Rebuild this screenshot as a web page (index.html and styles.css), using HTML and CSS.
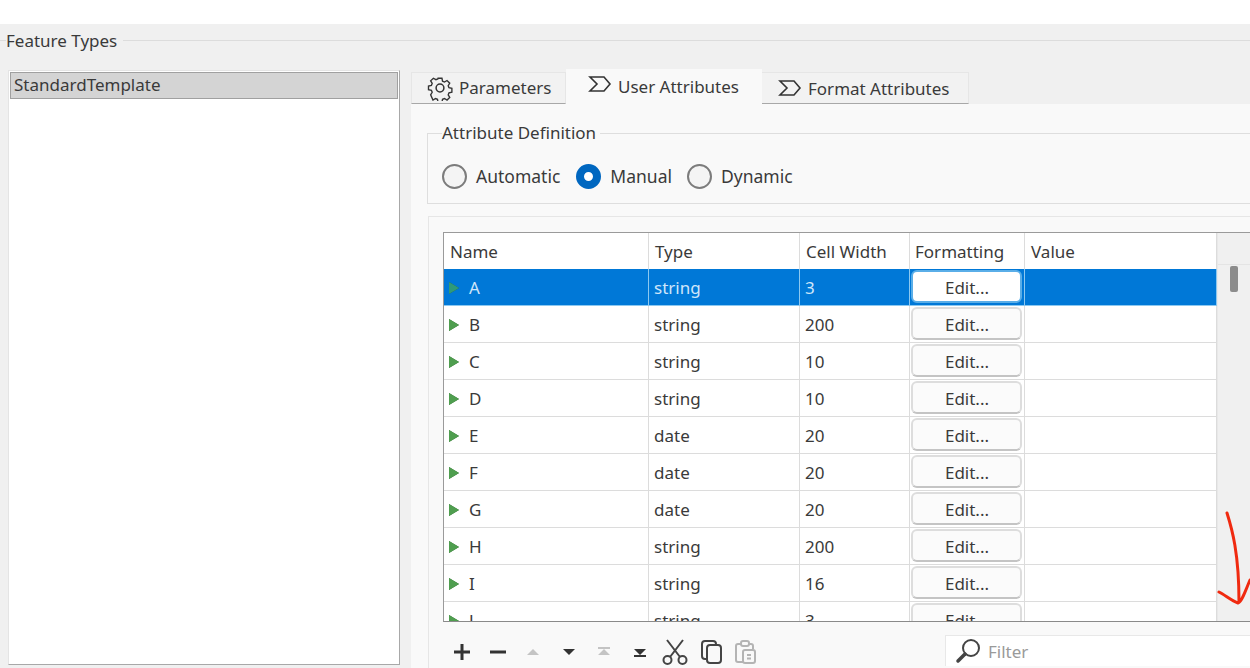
FILE: index.html
```html
<!DOCTYPE html>
<html lang="en">
<head>
<meta charset="utf-8">
<title>Feature Types</title>
<link rel="stylesheet" href="styles.css">
</head>
<body>
<div class="top-strip"></div>
<main class="main">
  <header class="section-head"><span>Feature Types</span></header>
  <div class="content">
    <div class="listbox"><div class="list-item">StandardTemplate</div></div>
    <section class="right">
      <nav class="tabs">
        <div class="tab tab-params">
          <svg class="tab-icon gear" viewBox="0 0 24 24" width="26" height="26"><path d="M10 2h4l.6 3 2 .9 2.6-1.6 2.8 2.8-1.6 2.6.8 2 3 .7v4l-3 .6-.8 2 1.6 2.6-2.8 2.8-2.6-1.6-2 .8-.6 3h-4l-.6-3-2-.8-2.6 1.6L2.4 19l1.6-2.6-.8-2-3-.6V10l3-.7.8-2L2.400 4.700 5.200 2 7.800 3.500l2-.8z" transform="translate(1.200 1.200) scale(.9)"/><circle cx="12" cy="12" r="3.600"/></svg>
          <span>Parameters</span>
        </div>
        <div class="tab tab-active">
          <svg class="tab-icon sigma" viewBox="0 0 24 18" width="24" height="18"><path d="M2 2h14l6 7-6 7H2l7-7z"/></svg>
          <span>User Attributes</span>
        </div>
        <div class="tab tab-format">
          <svg class="tab-icon sigma" viewBox="0 0 24 18" width="24" height="18"><path d="M2 2h14l6 7-6 7H2l7-7z"/></svg>
          <span>Format Attributes</span>
        </div>
      </nav>
      <div class="panel">
        <fieldset class="group">
          <legend>Attribute Definition</legend>
          <div class="radios">
            <span class="radio"></span><span class="radio-label">Automatic</span>
            <span class="radio radio-on"></span><span class="radio-label">Manual</span>
            <span class="radio"></span><span class="radio-label">Dynamic</span>
          </div>
        </fieldset>
        <div class="table-box">
          <div class="table-wrap">
            <div class="table">
              <div class="row head"><div>Name</div><div>Type</div><div>Cell Width</div><div class="head-fmt">Formatting</div><div>Value</div></div>
              <div class="row selected"><div class="name"><i class="arrow"></i>A</div><div>string</div><div>3</div><div class="fmt"><button class="edit">Edit...</button></div><div></div></div>
              <div class="row"><div class="name"><i class="arrow"></i>B</div><div>string</div><div>200</div><div class="fmt"><button class="edit">Edit...</button></div><div></div></div>
              <div class="row"><div class="name"><i class="arrow"></i>C</div><div>string</div><div>10</div><div class="fmt"><button class="edit">Edit...</button></div><div></div></div>
              <div class="row"><div class="name"><i class="arrow"></i>D</div><div>string</div><div>10</div><div class="fmt"><button class="edit">Edit...</button></div><div></div></div>
              <div class="row"><div class="name"><i class="arrow"></i>E</div><div>date</div><div>20</div><div class="fmt"><button class="edit">Edit...</button></div><div></div></div>
              <div class="row"><div class="name"><i class="arrow"></i>F</div><div>date</div><div>20</div><div class="fmt"><button class="edit">Edit...</button></div><div></div></div>
              <div class="row"><div class="name"><i class="arrow"></i>G</div><div>date</div><div>20</div><div class="fmt"><button class="edit">Edit...</button></div><div></div></div>
              <div class="row"><div class="name"><i class="arrow"></i>H</div><div>string</div><div>200</div><div class="fmt"><button class="edit">Edit...</button></div><div></div></div>
              <div class="row"><div class="name"><i class="arrow"></i>I</div><div>string</div><div>16</div><div class="fmt"><button class="edit">Edit...</button></div><div></div></div>
              <div class="row"><div class="name"><i class="arrow"></i>J</div><div>string</div><div>3</div><div class="fmt"><button class="edit">Edit...</button></div><div></div></div>
            </div>
            <div class="scrollbar"><div class="scroll-head"></div><div class="thumb"></div></div>
          </div>
          <div class="toolbar">
            <div class="tools">
              <svg viewBox="0 0 20 24" width="20" height="24"><path class="bold" d="M2 12h16M10 4v16"/></svg>
              <svg viewBox="0 0 20 24" width="20" height="24"><path class="bold" d="M2 12h16"/></svg>
              <svg viewBox="0 0 20 24" width="20" height="24"><path class="tri-off" d="M10 9l6 6H4z"/></svg>
              <svg viewBox="0 0 20 24" width="20" height="24"><path class="tri-on" d="M4 9h12l-6 6z"/></svg>
              <svg viewBox="0 0 20 24" width="20" height="24"><path class="tri-off" d="M4 7h12v2H4zM10 9l6 6H4z"/></svg>
              <svg viewBox="0 0 20 24" width="20" height="24"><path class="tri-on" d="M4 9h12l-6 6zM4 15h12v2H4z"/></svg>
              <svg viewBox="0 0 28 28" width="28" height="28" class="cut"><path class="line" d="M6 2l13 17M22 2L9 19"/><circle class="line" cx="6.500" cy="22" r="4"/><circle class="line" cx="21.500" cy="22" r="4"/></svg>
              <svg viewBox="0 0 24 26" width="24" height="26" class="copy"><rect class="line" x="2" y="2" width="14" height="18" rx="3"/><rect class="line fill" x="7" y="6" width="14" height="18" rx="3"/></svg>
              <svg viewBox="0 0 24 26" width="24" height="26" class="paste"><path class="line-off" d="M7 5H4a2 2 0 0 0-2 2v14a2 2 0 0 0 2 2h5M15 5h2a2 2 0 0 1 2 2v3"/><rect class="line-off" x="7" y="2" width="8" height="5" rx="2"/><rect class="line-off" x="9" y="11" width="12" height="13" rx="2"/><path class="line-off" d="M13 16h4M13 19.500h4"/></svg>
            </div>
            <div class="filter">
              <svg viewBox="0 0 26 26" width="26" height="26"><circle class="line" cx="16" cy="10" r="8"/><path class="handle" d="M10 16l-7 7"/></svg>
              <span>Filter</span>
            </div>
          </div>
        </div>
      </div>
    </section>
  </div>
</main>
<svg class="annotation" viewBox="0 0 40 100" width="40" height="100"><path d="M7 3c5 16 12 40 12 89M-1 82c6 3 13 9 19 11 4-1 8-14 12-23"/></svg>
</body>
</html>
```

FILE: styles.css
```css
* { box-sizing: border-box; }
html, body { margin: 0; height: 668px; overflow: hidden; }
body {
  background: #fff;
  color: #3a3a3a;
  font-family: "Noto Sans", "Open Sans", "Liberation Sans", sans-serif;
  font-size: 17px;
  position: relative;
  width: 1250px;
}
.top-strip { height: 24px; background: #fff; }
.main { height: 644px; background: #f0f0f0; }

.section-head {
  height: 34px;
  display: flex;
  align-items: center;
  line-height: 34px;
}
.section-head::before { content: ""; width: 6px; border-top: 1px solid #dcdcdc; margin-top: -2px; }
.section-head::after { content: ""; flex: 1; border-top: 1px solid #dcdcdc; margin: -2px 0 0 6px; }

.content { display: flex; padding: 12px 0 0 8px; }
.listbox {
  width: 392px;
  height: 595px;
  flex: none;
  background: #fff;
  border: 1px solid #a8a8a8;
  border-top-color: #e4e4e4;
  border-left-color: #e4e4e4;
  padding: 1px;
}
.list-item {
  height: 27px;
  line-height: 23px;
  padding-left: 3px;
  background: #d4d4d4;
  border: 1px solid #a0a0a0;
}

.right { width: 839px; margin-left: 11px; flex: none; }
.tabs { display: flex; align-items: flex-end; height: 35px; margin-top: -1px; }
.tab {
  height: 32px;
  display: flex;
  align-items: center;
  background: #f2f2f2;
  border: 1px solid #e6e6e6;
  border-bottom: 1px solid #a8a8a8;
  border-left: 0;
  line-height: 30px;
}
.tab-params { width: 155px; padding-left: 15px; border-left: 1px solid #e6e6e6; }
.tab-active { width: 196px; height: 35px; padding: 0 0 0 22px; background: #f9f9f9; border: 0; }
.tab-format { width: 207px; padding: 2px 0 0 16px; }
.tab-icon { flex: none; fill: none; stroke: #333; stroke-width: 1.600; margin-right: 6px; }
.tab-active .sigma { margin-top: -6px; }
.tab-format .sigma { margin-top: -2px; }
.gear { stroke-width: 1.400; }

.panel { height: 564px; background: #f9f9f9; overflow: hidden; padding-top: 17px; }
.group {
  margin: 0 -10px 0 16px;
  padding: 18px 0 14px 14px;
  min-width: 0;
  border: 1px solid #dedede;
  height: 83px;
}
.group legend { padding: 0 4px 0 0; line-height: 24px; }
.radios { display: flex; align-items: center; height: 26px; }
.radio {
  width: 25px;
  height: 25px;
  border-radius: 50%;
  border: 2px solid #7c7c7c;
  background: #f4f4f4;
  margin-right: 9px;
  flex: none;
}
.radio-on { background: #fff; border: 8px solid #0067c0; }
.radio-label { margin-right: 16px; font-size: 17.500px; }
.radio-on + .radio-label { margin-right: 15px; }

.table-box {
  margin: 12px 0 0 17px;
  height: 469px;
  padding: 15px 0 0 14px;
  border: 1px solid #e6e6e6;
  border-right: 0;
}
.table-wrap {
  display: flex;
  height: 390px;
  border-top: 1px solid #9a9a9a;
  border-bottom: 1px solid #8a8a8a;
  border-left: 1px solid #9a9a9a;
  overflow: hidden;
}
.table { width: 773px; flex: none; background: #fff; }
.row {
  display: grid;
  grid-template-columns: 205px 151px 110px 115px 192px;
  height: 37px;
  border-bottom: 1px solid #dcdcdc;
}
.row > div {
  border-right: 1px solid #dcdcdc;
  padding-left: 5px;
  line-height: 37px;
  min-width: 0;
}
.head { height: 36px; border-bottom: 0; }
.row.head > div { padding-left: 6px; line-height: 38px; }
.row.head > .head-fmt { padding-left: 5px; }
.selected { background: #0078d7; border-bottom-color: #8cc8f0; color: #cfe6fa; }
.selected > div { border-right-color: #8cc8f0; }
.row > .name { display: flex; align-items: center; padding-left: 5px; }
.arrow {
  width: 0;
  height: 0;
  border-left: 10px solid #4f9e4f;
  border-top: 6px solid transparent;
  border-bottom: 6px solid transparent;
  margin-right: 10px;
  flex: none;
  filter: drop-shadow(0 0 .6px #2c5f2c);
}
.selected .arrow { border-left-color: #2f9a7a; }
.row > .fmt { padding: 1px 1px 0 1px; }
.edit {
  display: block;
  width: 111px;
  height: 33px;
  margin: 0;
  padding: 2px 0 0 1px;
  font: inherit;
  line-height: 27px;
  color: #3a3a3a;
  background: #fbfbfb;
  border: 2px solid #dddddd;
  border-bottom-color: #c4c4c4;
  border-radius: 6px;
}
.selected .edit { background: #fff; border-color: #5aaee8; }

.scrollbar { flex: 1; background: #f0f0f0; position: relative; border-left: 1px solid #e8e8e8; }
.scroll-head { height: 32px; border-bottom: 1px solid #e4e4e4; }
.thumb {
  position: absolute;
  left: 12px;
  top: 33px;
  width: 8px;
  height: 26px;
  border-radius: 2px;
  background: #8c8c8c;
}

.toolbar { display: flex; align-items: flex-start; justify-content: space-between; height: 46px; }
.tools { display: flex; align-items: center; height: 30px; padding: 15px 0 0 9px; gap: 15.500px; box-sizing: content-box; }
.cut { margin: 0 -2px 0 -4.500px; }
.copy { margin: 0 -2px; }
.paste { margin-left: -3.500px; }
.bold { fill: none; stroke: #333; stroke-width: 3; }
.tri-off { fill: #c4c4c4; }
.tri-on { fill: #333; }
.line { fill: none; stroke: #444; stroke-width: 2; }
.line.fill { fill: #f9f9f9; }
.line-off { fill: none; stroke: #b4b4b4; stroke-width: 2; }
.handle { fill: none; stroke: #444; stroke-width: 3.500; stroke-linecap: round; }
.filter {
  width: 305px;
  height: 31px;
  margin-top: 13px;
  background: #fff;
  border-top: 1px solid #e8e8e8;
  border-left: 1px solid #e8e8e8;
  display: flex;
  align-items: center;
  padding-left: 9px;
  color: #9a9a9a;
  gap: 7px;
}

.annotation {
  position: absolute;
  left: 1220px;
  top: 510px;
  overflow: visible;
  fill: none;
  stroke: #f02a10;
  stroke-width: 3;
  stroke-linecap: round;
  stroke-linejoin: round;
}
```
